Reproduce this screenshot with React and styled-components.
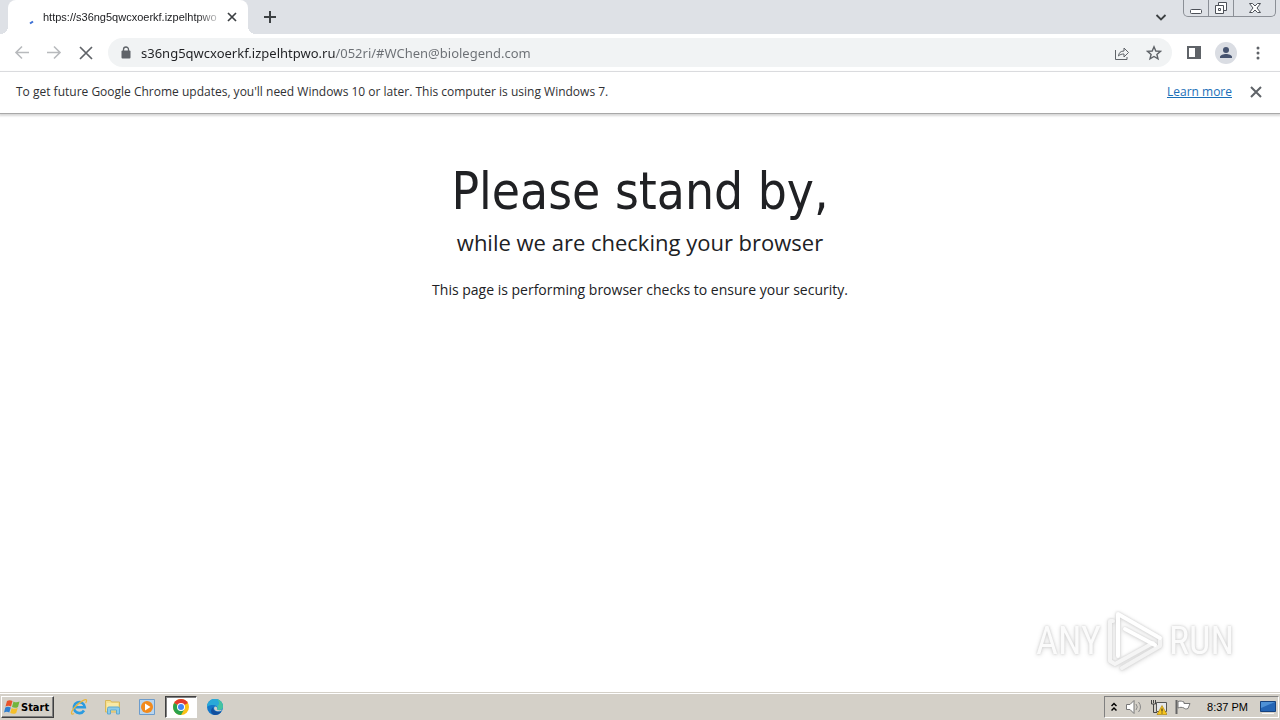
import React from "react";
import styled, { createGlobalStyle, css } from "styled-components";

const Global = createGlobalStyle`
  *, *::before, *::after { box-sizing: border-box; }
  html, body, #root { height: 100%; }
  body {
    margin: 0;
    background: #fff;
    color: #202124;
    font-family: "Open Sans", "Noto Sans", sans-serif;
    font-size: 12px;
  }
  button, input { font: inherit; color: inherit; }
`;

const Desktop = styled.div`
  display: flex;
  flex-direction: column;
  min-height: 100%;
`;

/* ---------- Tab strip ---------- */
const TabStrip = styled.header`
  display: flex;
  align-items: flex-start;
  height: 34px;
  padding-left: 8px;
  background: #dee1e6;
`;

const Tab = styled.div`
  position: relative;
  display: flex;
  align-items: center;
  width: 240px;
  height: 34px;
  padding: 0 8px 0 15px;
  background: #fff;
  border-radius: 8px 8px 0 0;
  &::before, &::after {
    content: "";
    position: absolute;
    bottom: 0;
    width: 8px;
    height: 8px;
  }
  &::before {
    left: -8px;
    background: radial-gradient(circle at 0 0, transparent 8px, #fff 8px);
  }
  &::after {
    right: -8px;
    background: radial-gradient(circle at 100% 0, transparent 8px, #fff 8px);
  }
`;

const TabTitle = styled.span`
  flex: 1;
  margin-left: 4px;
  white-space: nowrap;
  line-height: 16px;
  font-family: "Liberation Sans", sans-serif;
  font-size: 11px;
  mask-image: linear-gradient(90deg, #000 85%, transparent 100%);
`;

const IconButton = styled.button`
  display: flex;
  align-items: center;
  justify-content: center;
  flex: none;
  width: ${(p) => p.$size || 32}px;
  height: ${(p) => p.$size || 32}px;
  padding: 0;
  border: 0;
  border-radius: 50%;
  background: transparent;
  color: ${(p) => p.$tone || "#5f6368"};
  svg { display: block; }
`;

const NewTab = styled(IconButton)`
  margin: 3px 0 0 8px;
`;

const TabSearch = styled(IconButton)`
  margin: 3px 8px 0 auto;
`;

const Caption = styled.div`
  display: flex;
  width: 93px;
  height: 17px;
  margin-right: 4px;
  border: 1px solid #8b8f96;
  border-top: 0;
  border-radius: 0 0 5px 5px;
`;

const CaptionButton = styled.button`
  display: flex;
  align-items: center;
  justify-content: center;
  flex: ${(p) => p.$grow || 25} 0 0;
  padding: 0;
  border: 0;
  border-left: ${(p) => (p.$first ? "0" : "1px solid #8b8f96")};
  background: transparent;
  color: #4d5158;
`;

/* ---------- Toolbar ---------- */
const Toolbar = styled.nav`
  display: flex;
  align-items: center;
  height: 38px;
  padding: 0 6px;
  background: #fff;
  border-bottom: 1px solid #dadce0;
`;

const Omnibox = styled.div`
  display: flex;
  align-items: center;
  flex: 1;
  height: 29px;
  margin: 0 6px;
  padding: 0 2px 0 10px;
  border-radius: 15px;
  background: #f1f3f4;
`;

/* The host is dark and the path that follows it is grey. */
const Address = styled.input`
  flex: 1;
  min-width: 0;
  height: 24px;
  margin-left: 6px;
  padding: 0 0 0 1px;
  border: 0;
  outline: 0;
  font-family: "Noto Sans", "Open Sans", sans-serif;
  font-size: 13px;
  color: #202124;
  background: linear-gradient(90deg, #202124 195px, #6b6f74 195px);
  background-clip: text;
  -webkit-background-clip: text;
  -webkit-text-fill-color: transparent;
`;

/* ---------- Info bar ---------- */
const InfoBar = styled.aside`
  display: flex;
  align-items: center;
  height: 42px;
  padding: 0 8px 2px 16px;
  border-bottom: 1px solid #a8a8a8;
  box-shadow: 0 1px 2px 1px #d8d8d8;
  color: #303134;
  a {
    margin: 0 8px 0 auto;
    color: #1a6fb8;
  }
`;

/* ---------- Page ---------- */
const Page = styled.main`
  position: relative;
  flex: 1;
  padding: 42px 16px 0;
  text-align: center;
`;

const Title = styled.h1`
  margin: 0;
  font-family: "DejaVu Sans Condensed", "DejaVu Sans", sans-serif;
  font-size: 51px;
  font-weight: 400;
  line-height: 72px;
`;

const Subtitle = styled.p`
  margin: 0;
  font-size: 22px;
  line-height: 28px;
`;

const Note = styled.p`
  margin: 22px 0 0;
  font-size: 14px;
  line-height: 24px;
`;

const Watermark = styled.div`
  position: absolute;
  right: 46px;
  bottom: 18px;
  display: flex;
  align-items: center;
  gap: 5px;
  color: #fbfbfb;
  font-family: "Roboto Condensed", "Open Sans Condensed", sans-serif;
  font-size: 38px;
  line-height: 66px;
  filter: drop-shadow(0 0 1px #ccc) drop-shadow(0 1px 2px #e0e0e0);
`;

/* ---------- Taskbar ---------- */
const Taskbar = styled.footer`
  display: flex;
  align-items: center;
  height: 28px;
  padding: 1px 0 0 1px;
  background: #d4d0c8;
  border-top: 1px solid #d4d0c8;
  box-shadow: inset 0 1px 0 #fff;
`;

const Start = styled.button`
  display: flex;
  align-items: center;
  gap: 1px;
  width: 53px;
  height: 22px;
  margin-right: 7px;
  padding: 0 2px;
  border: 1px solid;
  border-color: #fff #404040 #404040 #fff;
  box-shadow: inset -1px -1px 0 #808080;
  background: #d4d0c8;
  color: #000;
  font-family: "DejaVu Sans Condensed", "DejaVu Sans", sans-serif;
  font-size: 11px;
  font-weight: 700;
`;

const TaskButton = styled.button`
  display: flex;
  align-items: center;
  justify-content: center;
  width: 32px;
  height: 22px;
  margin-left: 2px;
  padding: 0;
  border: 1px solid transparent;
  background: transparent;
  ${(p) =>
    p.$active &&
    css`
      background: #fff;
      border-color: #404040 #fff #fff #404040;
      box-shadow: inset 1px 1px 0 #808080;
    `}
`;

const Tray = styled.div`
  display: flex;
  align-items: center;
  gap: 8px;
  height: 22px;
  margin: 0 1px 0 auto;
  padding: 0 2px 0 6px;
  border: 1px solid;
  border-color: #808080 #fff #fff #808080;
  color: #000;
  svg { display: block; }
`;

const Clock = styled.time`
  margin: 0 4px 0 8px;
  font-family: "Liberation Sans", sans-serif;
  font-size: 11px;
  line-height: 16px;
`;

/* ---------- Icons ---------- */
const Svg = ({ w = 16, h = w, box, children }) => (
  <svg width={w} height={h} viewBox={box || `0 0 ${w} ${h}`} fill="none" stroke="currentColor" aria-hidden="true">
    {children}
  </svg>
);
const Cross = ({ w = 16, k = 4, sw = 2 }) => (
  <Svg w={w}><path d={`M${k} ${k}L${w - k} ${w - k}M${w - k} ${k}L${k} ${w - k}`} strokeWidth={sw} /></Svg>
);

function PlayLogo() {
  return (
    <Svg w={58} h={62}>
      <g strokeWidth="4" strokeLinejoin="round" strokeLinecap="round">
        <path d="M16 58l38-22v-6" stroke="#f3f3f3" />
        <path d="M7 11H4v40l5 3 38-21" stroke="#f5f5f5" />
        <path d="M12 46V4l42 24" stroke="#fff" />
        <path d="M19 19l30 16" stroke="#fff" />
      </g>
    </Svg>
  );
}

export default function App() {
  return (
    <Desktop>
      <Global />
      <TabStrip>
        <Tab>
          <Svg w={16}><path d="M7 14.500l3-2" stroke="#3b6fd4" strokeWidth="2" /></Svg>
          <TabTitle>https://s36ng5qwcxoerkf.izpelhtpwo</TabTitle>
          <IconButton $size={16} $tone="#3c4043" aria-label="Close tab"><Cross sw={1.7} /></IconButton>
        </Tab>
        <NewTab $size={28} $tone="#3c4043" aria-label="New tab">
          <Svg w={14}><path d="M7 1v12M1 7h12" strokeWidth="2" /></Svg>
        </NewTab>
        <TabSearch $size={28} $tone="#3c4043" aria-label="Search tabs">
          <Svg w={12}><path d="M1.500 4L6 8.500 10.500 4" strokeWidth="1.800" /></Svg>
        </TabSearch>
        <Caption>
          <CaptionButton $first aria-label="Minimize">
            <Svg w={14}><rect x="1.500" y="8.500" width="11" height="4" rx="1" fill="#fff" /></Svg>
          </CaptionButton>
          <CaptionButton aria-label="Restore">
            <Svg w={14}><path d="M4.500 4V1.500h8v8H10" fill="#fff" /><path d="M1.500 4.500h8v8h-8zM4.500 7.500h2v2h-2z" fill="#fff" /></Svg>
          </CaptionButton>
          <CaptionButton $grow={42} aria-label="Close">
            <Svg w={14}><path d="M1.500 2.500h3L7 5l2.500-2.500h3L9 7l3.500 4.500h-3L7 9l-2.500 2.500h-3L5 7z" fill="#fff" /></Svg>
          </CaptionButton>
        </Caption>
      </TabStrip>

      <Toolbar>
        <IconButton $tone="#b8babd" aria-label="Back"><Svg w={16}><path d="M15 7.500H2M8 1.500l-6 6 6 6" strokeWidth="1.600" /></Svg></IconButton>
        <IconButton $tone="#b8babd" aria-label="Forward"><Svg w={16}><path d="M1 7.500h13M8 1.500l6 6-6 6" strokeWidth="1.600" /></Svg></IconButton>
        <IconButton aria-label="Stop loading"><Cross k={2} sw={1.7} /></IconButton>
        <Omnibox>
          <Svg w={16}><rect x="3.500" y="5.500" width="9" height="8" rx="1" fill="#5f6368" stroke="none" /><path d="M5.500 7V4.500a2.500 2.500 0 0 1 5 0V7" stroke="#5f6368" strokeWidth="1.300" /></Svg>
          <Address aria-label="Address" defaultValue="s36ng5qwcxoerkf.izpelhtpwo.ru/052ri/#WChen@biolegend.com" />
          <IconButton aria-label="Share">
            <Svg w={16}><path d="M1.500 5v9.500H13V12M4.500 11c.4-3.200 2-5 5.500-5V3l4.500 4.500L10 12V9c-2.500 0-4 .5-5.500 2z" /></Svg>
          </IconButton>
          <IconButton aria-label="Bookmark">
            <Svg w={16}><path d="M8 1.800l1.800 4.200 4.600.4-3.500 3 1.100 4.500L8 11.500l-4 2.400 1.100-4.500-3.500-3L6.200 6z" strokeWidth="1.400" /></Svg>
          </IconButton>
        </Omnibox>
        <IconButton aria-label="Side panel">
          <Svg w={16}><path d="M2 2h12v11H2z" strokeWidth="2" /><path d="M9 2h5v11H9z" fill="currentColor" stroke="none" /></Svg>
        </IconButton>
        <IconButton aria-label="Profile">
          <Svg w={22}><circle cx="11" cy="11" r="11" fill="#dadde3" stroke="none" /><circle cx="11" cy="8" r="3" fill="#46536f" stroke="none" /><path d="M5 16v-1c0-2 3.500-3 6-3s6 1 6 3v1z" fill="#46536f" stroke="none" /></Svg>
        </IconButton>
        <IconButton aria-label="Menu">
          <Svg w={16}><g fill="currentColor" stroke="none"><circle cx="8" cy="3" r="1.500" /><circle cx="8" cy="8" r="1.500" /><circle cx="8" cy="13" r="1.500" /></g></Svg>
        </IconButton>
      </Toolbar>

      <InfoBar>
        <span>To get future Google Chrome updates, you'll need Windows 10 or later. This computer is using Windows 7.</span>
        <a href="#learn">Learn more</a>
        <IconButton aria-label="Dismiss"><Cross k={3} /></IconButton>
      </InfoBar>

      <Page>
        <Title>Please stand by,</Title>
        <Subtitle>while we are checking your browser</Subtitle>
        <Note>This page is performing browser checks to ensure your security.</Note>
        <Watermark><span>ANY</span><PlayLogo /><span>RUN</span></Watermark>
      </Page>

      <Taskbar>
        <Start>
          <Svg w={16}>
            <g stroke="none">
              <path d="M3 2c2-1.200 3.500-1 5.500 0L7 7.500c-2-1.200-3.500-1-5.500 0z" fill="#e8532a" /><path d="M9.500 2.500c2 1.200 4 1 6 0L14 8c-2 1.200-4 1-6 0z" fill="#72b53b" />
              <path d="M1.300 8.500c2-1.200 3.500-1 5.500 0l-1.500 5c-2-1.200-3.300-1-5.300 0z" fill="#2f7fd0" /><path d="M7.700 9c2 1.200 4 1 6 0l-1.500 5c-2 1.200-4 1-6 0z" fill="#f5bf2a" />
            </g>
          </Svg>
          Start
        </Start>
        <TaskButton aria-label="Internet Explorer">
          <Svg w={18}>
            <path d="M14 12.500a5.500 5.500 0 1 1 .8-3.200H5" stroke="#2b9be0" strokeWidth="2.600" />
            <path d="M4 15.500c-3 2-4-1 1-6.500S16 .5 16.500 2c.3 1-.2 2-.8 3" stroke="#e9b63c" strokeWidth="1.300" />
          </Svg>
        </TaskButton>
        <TaskButton aria-label="File Explorer">
          <Svg w={16}>
            <path d="M.5 1.500h5l1 1.500h8v10H.5z" fill="#f6df8c" stroke="#d8b75a" />
            <path d="M2 4h11v4H2z" fill="#f9e9a6" stroke="none" />
            <path d="M2.500 15V9.500q0-1.500 1.500-1.500h9q1.500 0 1.500 1.500V15h-3v-4h-6v4z" fill="#8ccbe9" stroke="#5fa9d0" />
          </Svg>
        </TaskButton>
        <TaskButton aria-label="Media Player">
          <Svg w={16}><path d="M.5.500h15v15H.5z" fill="#b9d5ee" stroke="#6c9ccc" /><circle cx="8" cy="8" r="6" fill="#f28a1c" stroke="none" /><path d="M6 4.500l5.500 3.500L6 11.500z" fill="#fff" stroke="none" /></Svg>
        </TaskButton>
        <TaskButton $active aria-label="Google Chrome">
          <Svg w={16}>
            <g stroke="none">
              <circle cx="8" cy="8" r="8" fill="#fbc116" /><path d="M8 8L1.100 4A8 8 0 0 1 14.900 4z" fill="#e33b2e" /><path d="M8 8L1.100 4A8 8 0 0 0 8 16l3.500-6z" fill="#2ba24c" />
              <circle cx="8" cy="8" r="4" fill="#fff" /><circle cx="8" cy="8" r="3" fill="#4285f4" />
            </g>
          </Svg>
        </TaskButton>
        <TaskButton aria-label="Microsoft Edge">
          <Svg w={16}>
            <g stroke="none">
              <circle cx="8" cy="8" r="8" fill="#1477c9" />
              <path d="M0 8a8 8 0 0 1 16-.5c0 3.300-3.500 4.300-6 3 1.400-2-.4-4.500-3.500-4.500C3.500 6 1 6.500 0 8z" fill="#29a9d8" />
              <path d="M10 .3a8 8 0 0 1 6 7.200c0 3.300-3.500 4.300-6 3 1-1.500.8-2.700 0-3.500C13 6 12.500 2.500 10 .3z" fill="#45c3a0" />
              <path d="M6.200 8c-.6 3.500 3 5.700 8.300 4.500C13 15 10.500 16 8 16c-4-.5-5.500-5-1.800-8z" fill="#134f9e" />
              <path d="M8 7.500c2 0 2.700 1.700 1.800 3 1.500 1 3.500 1 5.200.3-1 2-6 2-7.500 0-.8-1.200-.4-2.700.5-3.300z" fill="#d4d0c8" />
            </g>
          </Svg>
        </TaskButton>
        <Tray>
          <Svg w={6} h={10}><path d="M.5 4L3 1.500 5.500 4M.5 8.500L3 6l2.500 2.500" strokeWidth="1.500" /></Svg>
          <Svg w={18} h={16}><path d="M1.500 5.500H5L9 1.500v13l-4-4H1.500z" fill="#fff" stroke="#777" /><path d="M11 5q2.500 3 0 6M13.500 3q4 5 0 10" stroke="#888" /></Svg>
          <Svg w={16}>
            <path d="M5.500 3.500h10v9h-10z" fill="#e5e7ea" stroke="#555" />
            <path d="M.5 1v4h4V1M2.500 1v3M2.500 5v8.500H6" stroke="#444" />
            <path d="M11 6.500l5 9H6z" fill="#f7c51e" stroke="#a87c00" strokeWidth=".6" /><path d="M11 9.500v3M11 13.500v1" stroke="#222" />
          </Svg>
          <Svg w={16}><path d="M1.500 1v14" stroke="#666" strokeWidth="2" /><path d="M3 2.500c3-1 4 0 6 .5v1.500h6l-2 5c-2 .8-3 .5-4-.5-2-.8-4-1-6 0z" fill="#fff" stroke="#777" /></Svg>
          <Clock>8:37 PM</Clock>
          <Svg w={16}><path d="M.5 2.500h15v10H.5z" fill="#2465b5" stroke="#16427e" /><path d="M1 3h14L1 9z" fill="#4e91d6" stroke="none" /><path d="M2 14.500h12" stroke="#f7f7f7" /></Svg>
        </Tray>
      </Taskbar>
    </Desktop>
  );
}
